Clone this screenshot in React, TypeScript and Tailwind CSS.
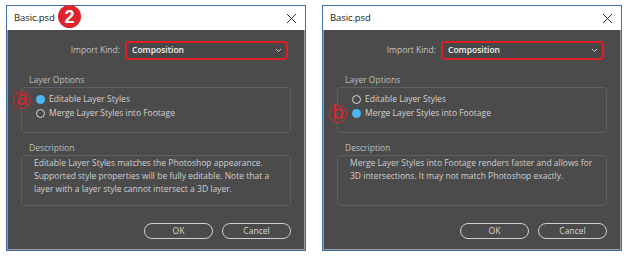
import React from 'react';

type DialogProps = {
    selected: 'editable' | 'merge';
    description: string[];
    badge?: boolean;
    marker: string;
};

const FONT = "font-['Open_Sans',sans-serif]";

function Radio({ on }: { on: boolean }) {
    return on ? (
        <span className="w-[9px] h-[9px] rounded-full bg-[#4cb6ee] shrink-0" />
    ) : (
        <span className="w-[9px] h-[9px] rounded-full border-[1.5px] border-[#d6d6d6] shrink-0" />
    );
}

function Dialog({ selected, description, badge, marker }: DialogProps) {
    const markerTop = selected === 'editable' ? 'top-[85px]' : 'top-[99px]';
    return (
        <div className={`relative w-[300px] h-[246px] border border-[#3d6fa6] bg-white flex flex-col ${FONT}`}>
            {/* Title bar */}
            <div className="h-[24px] flex items-center justify-between pl-[7px] pr-[7px] bg-white">
                <span className="text-[9.5px] text-[#1a1a1a] tracking-[-0.1px]">Basic.psd</span>
                <svg width="11" height="11" viewBox="0 0 11 11" className="mr-[1px]">
                    <path d="M1 1 L10 10 M10 1 L1 10" stroke="#333" strokeWidth="1" fill="none" />
                </svg>
            </div>

            {/* Body */}
            <div className="flex-1 bg-[#4b4b4b] border border-[#9a9a9a] border-t-0 flex flex-col">
                <div className="flex items-center mt-[11px] h-[19px]">
                    <span className="w-[117px] text-right pr-[5px] text-[8.5px] text-[#c4c4c4]">Import Kind:</span>
                    <div className="w-[163px] h-[19px] border-[2.5px] border-[#dc1f26] rounded-[4px] bg-[#474747] flex items-center justify-between pl-[5px] pr-[4px]">
                        <span className="text-[8.5px] font-semibold text-[#f2f2f2]">Composition</span>
                        <svg width="7" height="5" viewBox="0 0 7 5">
                            <path d="M1 1 L3.5 3.5 L6 1" stroke="#cfcfcf" strokeWidth="1" fill="none" />
                        </svg>
                    </div>
                </div>

                <div className="mt-[15px] pl-[21px] text-[8.5px] leading-[10px] text-[#bdbdbd]">Layer Options</div>
                <div className="mx-[13px] mt-[2px] h-[46px] border border-[#5f5f5f] rounded-[3px] flex flex-col gap-[4px] pt-[6px] pl-[14px]">
                    <div className="flex items-center gap-[4px] h-[10px]">
                        <Radio on={selected === 'editable'} />
                        <span className="text-[8.5px] text-[#d2d2d2]">Editable Layer Styles</span>
                    </div>
                    <div className="flex items-center gap-[4px] h-[10px]">
                        <Radio on={selected === 'merge'} />
                        <span className="text-[8.5px] text-[#d2d2d2]">Merge Layer Styles into Footage</span>
                    </div>
                </div>

                <div className="mt-[10px] pl-[21px] text-[8.5px] leading-[10px] text-[#bdbdbd]">Description</div>
                <div className="mx-[13px] mt-[2px] h-[51px] border border-[#5f5f5f] rounded-[3px] pl-[12px]">
                    {description.map((line, i) => (
                        <div key={i} className="text-[8.5px] leading-[13px] text-[#cfcfcf]">{line}</div>
                    ))}
                </div>

                <div className="mt-[17px] flex justify-end gap-[9px] pr-[13px]">
                    <button className="w-[69px] h-[16px] rounded-full border-[1.5px] border-[#cfcfcf] text-[8.5px] text-[#d8d8d8] flex items-center justify-center">OK</button>
                    <button className="w-[69px] h-[16px] rounded-full border-[1.5px] border-[#cfcfcf] text-[8.5px] text-[#d8d8d8] flex items-center justify-center">Cancel</button>
                </div>
            </div>

            {/* Annotation overlays */}
            {badge && (
                <div className="absolute left-[51px] top-[-1px] w-[23px] h-[23px] rounded-full bg-[#e0242b] flex items-center justify-center">
                    <span className="text-white font-bold text-[18px] leading-none font-['Liberation_Sans',sans-serif]">2</span>
                </div>
            )}
            <div className={`absolute left-[6px] ${markerTop} w-[18px] h-[18px] rounded-full border-[1.5px] border-[#e0242b] flex items-center justify-center bg-[#4b4b4b]`}>
                <span className="text-[#e0242b] text-[20px] leading-none -mt-[4px] font-['Liberation_Sans',sans-serif]">{marker}</span>
            </div>
        </div>
    );
}

export default function App() {
    return (
        <div className="w-[630px] h-[258px] bg-white flex gap-[16px] pl-[6px] pt-[5px]">
            <Dialog
                selected="editable"
                marker="a"
                badge
                description={[
                    'Editable Layer Styles matches the Photoshop appearance.',
                    'Supported style properties will be fully editable. Note that a',
                    'layer with a layer style cannot intersect a 3D layer.',
                ]}
            />
            <Dialog
                selected="merge"
                marker="b"
                description={[
                    'Merge Layer Styles into Footage renders faster and allows for',
                    '3D intersections. It may not match Photoshop exactly.',
                ]}
            />
        </div>
    );
}
